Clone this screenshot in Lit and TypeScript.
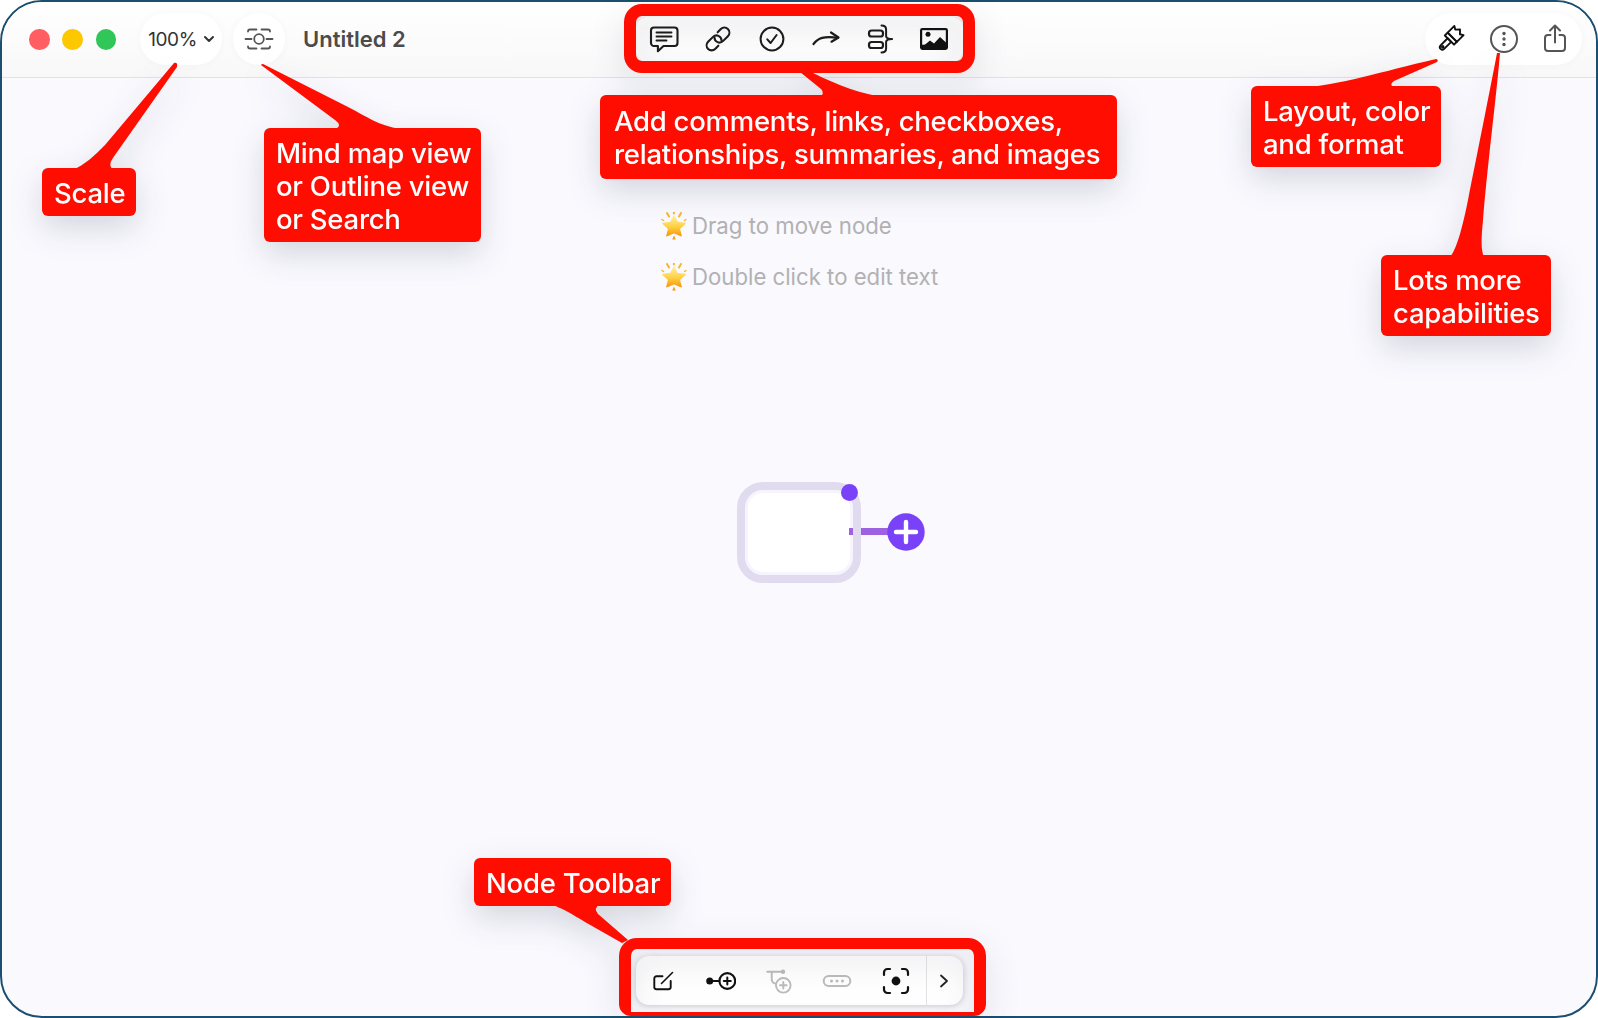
import { LitElement, html, css, svg } from "lit";
import { customElement } from "lit/decorators.js";

type Callout = { x: number; y: number; w: number; h: number; lines: string[] };

const callouts: Callout[] = [
  { x: 42, y: 168, w: 94, h: 48, lines: ["Scale"] },
  { x: 264, y: 128, w: 217, h: 114, lines: ["Mind map view", "or Outline view", "or Search"] },
  {
    x: 600,
    y: 95,
    w: 517,
    h: 84,
    lines: ["Add comments, links, checkboxes,", "relationships, summaries, and images"],
  },
  { x: 1251, y: 86, w: 190, h: 81, lines: ["Layout, color", "and format"] },
  { x: 1381, y: 255, w: 170, h: 81, lines: ["Lots more", "capabilities"] },
  { x: 474, y: 858, w: 197, h: 48, lines: ["Node Toolbar"] },
];

// the pointers that run from each red label to what it explains
const tails = [
  "M72 170 C85 165 95 155 105 145 L174 63 Q178 62 177 67 L115 155 C110 162 108 166 114 170 Z",
  "M261 65 Q262 63 265 65 L350 108 C365 116 380 126 400 129 L335 129 Q343 126 335 120 Z",
  "M800 72 L821 89 Q826 94 818 97 L885 97 C860 94 840 86 813 73 Z",
  "M1300 88 C1340 85 1380 72 1436 59 Q1439 60 1437 62 L1394 81 Q1388 85 1395 88 Z",
  "M1450 257 C1456 250 1462 230 1468 200 C1478 150 1490 90 1497 53 L1500 53 C1496 100 1488 160 1483 220 C1481 240 1481 250 1484 257 Z",
  "M550 904 C562 908 572 914 585 922 L622 943 L628 940 L598 914 Q593 908 600 904 Z",
];

const star = html`<svg class="star" width="26" height="28" viewBox="0 0 26 28">
  <defs>
    <linearGradient id="st" x1="0" y1="0" x2="0" y2="1">
      <stop offset="0" stop-color="#fff0a0" />
      <stop offset="0.55" stop-color="#ffd040" />
      <stop offset="1" stop-color="#f79a12" />
    </linearGradient>
  </defs>
  <path d="M6 1l2 3.5M20 1l-2 3.5M12.9 .5v1" stroke="#f8b730" stroke-width="2" stroke-linecap="round" fill="none" />
  <path d="M1 7.5l1.5 1M25 7.5l-1.5 1" stroke="#f8b730" stroke-width="1.5" stroke-linecap="round" fill="none" />
  <polygon
    points="13,4 16.2,10.6 24,11.5 18.2,16.7 20,23.6 13,20.5 6,23.6 7.8,16.7 2,11.5 9.8,10.6"
    fill="url(#st)"
    stroke="url(#st)"
    stroke-width="1.6"
    stroke-linejoin="round"
  />
  <path d="M13 23.5l1.8 4h-3.6z" fill="#f59a14" />
</svg>`;

const icon = (body: unknown, color = "#1c1c1c", w = 1.9) =>
  html`<svg
    class="ico"
    width="30"
    height="30"
    viewBox="0 0 30 30"
    fill="none"
    stroke=${color}
    stroke-width=${w}
    stroke-linecap="round"
    stroke-linejoin="round"
  >
    ${body}
  </svg>`;

const topIcons = [
  icon(svg`<path d="M5 3.500h20.500a3 3 0 0 1 3 3v12.500a3 3 0 0 1-3 3H14.500l-5.600 5.200v-5.200H5a3 3 0 0 1-3-3V6.500a3 3 0 0 1 3-3z" stroke-width="2.100"/><path d="M7.500 8.500h15M7.500 12.500h15M7.500 16.500h10"/>`),
  icon(svg`<g transform="rotate(-45 15 15)" stroke-width="2.100"><path d="M10.500 20H6A5 5 0 0 1 6 10H13A5 5 0 0 1 16.500 18.500"/><path d="M19.500 10H24A5 5 0 0 1 24 20H17A5 5 0 0 1 13.500 11.500"/></g>`),
  icon(svg`<circle cx="15" cy="15" r="11.400" stroke-width="2"/><path d="M10.300 15.300l3.300 3.700 6-8" stroke-width="2"/>`),
  icon(svg`<path d="M2.500 20C7 14 13 11.800 27 13.800" stroke-width="2.200"/><path d="M20 8.500l7.500 5-7 4.200" stroke-width="2.200"/>`),
  icon(svg`<rect x="4" y="6.500" width="14" height="6" rx="2.600" stroke-width="2.200"/><rect x="4" y="18" width="14" height="6" rx="2.600" stroke-width="2.200"/><path d="M16.500 1.500c3.400 0 4.600 1 4.600 4v6.400c0 2 1.200 3.100 6 3.100-4.800 0-6 1.100-6 3.100v6.400c0 3-1.200 4-4.600 4" stroke-width="2"/>`),
  icon(svg`<rect x="1" y="4" width="28" height="22" rx="2.400" fill="#111" stroke="none"/><rect x="3.200" y="6.200" width="23.600" height="14.500" fill="#fff" stroke="none"/><circle cx="9" cy="10.300" r="2.500" fill="#111" stroke="none"/><path d="M3 23l8-6.500 4 3 6-6.500 6 5.500v5.500H3z" fill="#111" stroke="none"/>`),
];

const bottomIcons = [
  icon(svg`<path d="M14.500 10.300H8.500a2.200 2.200 0 0 0-2.200 2.200v8.500a2.200 2.200 0 0 0 2.200 2.200h12a2.200 2.200 0 0 0 2.200-2.200v-6"/><path d="M13.500 17.500L24.500 6.500" stroke-width="1.600"/>`, "#111"),
  icon(svg`<circle cx="3.700" cy="15" r="3.500" fill="#111" stroke="none"/><path d="M6 15h7.500"/><circle cx="21.300" cy="15" r="7.900" stroke-width="2.100"/><path d="M21.300 11.500v7M17.800 15h7" stroke-width="2"/>`, "#111"),
  icon(svg`<path d="M3.300 5.700H19M7.700 5.700V13a5 5 0 0 0 4.300 4.800"/><circle cx="19" cy="5.700" r="2.200" fill="#bbb" stroke="none"/><circle cx="19.300" cy="19.300" r="7.300"/><path d="M19.300 16v6.600M16 19.300h6.600"/>`, "#bcbcbc"),
  icon(svg`<rect x="1.700" y="10" width="26.600" height="10" rx="5" stroke-width="2"/><g fill="#bcbcbc" stroke="none"><circle cx="9.500" cy="15" r="1.500"/><circle cx="15" cy="15" r="1.500"/><circle cx="20.500" cy="15" r="1.500"/></g>`, "#bcbcbc"),
  icon(svg`<path d="M3 9V6.500A3.500 3.500 0 0 1 6.500 3H9M21 3h2.500A3.500 3.500 0 0 1 27 6.500V9M27 21v2.500a3.500 3.500 0 0 1-3.500 3.500H21M9 27H6.500A3.500 3.500 0 0 1 3 23.500V21" stroke-width="2.200"/><circle cx="15" cy="15" r="4.400" fill="#111" stroke="none"/>`, "#111"),
];

const rightIcons = [
  icon(svg`<g transform="translate(-1.500 0) rotate(45 15 15)" stroke-width="1.900"><path d="M8.500 12.500V3l3.200 2L15 1.500 18.300 5l3.200-2v9.500z"/><path d="M8.500 12.500h13v4h-13z"/><path d="M12.500 16.500h5v10a2.500 2.500 0 0 1-5 0z"/><circle cx="15" cy="26" r="0.800"/></g>`, "#111"),
  icon(svg`<circle cx="15" cy="15" r="13" stroke-width="2"/><g fill="#555" stroke="none"><circle cx="15" cy="9.500" r="1.700"/><circle cx="15" cy="15" r="1.700"/><circle cx="15" cy="20.500" r="1.700"/></g>`, "#555"),
  icon(svg`<g transform="translate(-1 0)"><path d="M10.500 11H8a3 3 0 0 0-3 3v10a3 3 0 0 0 3 3h14a3 3 0 0 0 3-3V14a3 3 0 0 0-3-3h-2.500"/><path d="M15 18.500V2M10 6.500L15 1.500l5 5"/></g>`, "#555", 2),
];

const mapIcon = icon(
  svg`<circle cx="15" cy="15" r="4.800"/><path d="M1.500 15h6M22.500 15h6M4 7.500c0-1.500 .5-2 2-2h6.500M26 7.500c0-1.500-.5-2-2-2h-6.500M4 22.500c0 1.500 .5 2 2 2h6.500M26 22.500c0 1.500-.5 2-2 2h-6.500"/>`,
  "#555",
  1.8
);

@customElement("app-root")
export class AppRoot extends LitElement {
  static styles = css`
    :host {
      display: block;
      font-family: Inter, "Liberation Sans", sans-serif;
    }

    .stage {
      position: relative;
      width: 1598px;
      height: 1018px;
      background: #ffffff;
      overflow: hidden;
    }

    .window {
      box-sizing: border-box;
      width: 100%;
      height: 100%;
      display: flex;
      flex-direction: column;
      border: 2px solid #1b4e70;
      border-radius: 42px;
      overflow: hidden;
      background: #f9f9fe;
    }

    .titlebar {
      box-sizing: border-box;
      flex: none;
      height: 75.5px;
      display: grid;
      grid-template-columns: 1fr auto 1fr;
      align-items: center;
      padding: 0 14px;
      background: linear-gradient(#ffffff, #f8f8f9);
      border-bottom: 1px solid #e3e3e6;
    }

    .left {
      display: flex;
      align-items: center;
      margin-left: 13px;
    }

    .lights {
      display: flex;
      gap: 12.8px;
      margin-right: 24px;
    }

    .light {
      width: 20.5px;
      height: 20.5px;
      border-radius: 50%;
    }

    .red {
      background: #ff5f63;
    }

    .yellow {
      background: #fdc800;
    }

    .green {
      background: #30c758;
    }

    .pill {
      display: flex;
      align-items: center;
      height: 52px;
      border-radius: 26px;
      background: #ffffff;
      box-shadow: 0 0 8px rgba(0, 0, 0, 0.03);
    }

    .zoom {
      box-sizing: border-box;
      width: 82px;
      justify-content: center;
      gap: 6px;
      padding-left: 1px;
      font-size: 19px;
      letter-spacing: -0.4px;
      color: #333333;
    }

    .map {
      width: 52px;
      justify-content: center;
      margin-left: 11px;
    }

    .title {
      margin: -1px 0 0 18px;
      font-size: 22px;
      font-weight: 600;
      color: #4b4b4b;
    }

    .tools-bg {
      background: #f1f1f3;
      height: 45px;
    }

    .tools {
      box-sizing: border-box;
      width: 327px;
      height: 45px;
      display: flex;
      align-items: center;
      gap: 24.2px;
      padding-left: 13px;
      background: #ffffff;
      border-radius: 12px;
    }

    .right {
      justify-self: end;
      box-sizing: border-box;
      width: 157px;
      gap: 22px;
      padding-left: 12px;
    }

    .ico {
      flex: none;
      display: block;
    }

    .canvas {
      flex: 1;
      position: relative;
      display: flex;
      justify-content: center;
      align-items: flex-end;
      padding-bottom: 11px;
    }

    .hints {
      position: absolute;
      left: 658.5px;
      top: 134px;
      display: flex;
      flex-direction: column;
      gap: 23px;
    }

    .hint {
      display: flex;
      align-items: center;
      height: 28px;
      gap: 5.5px;
      font-size: 22.2px;
      color: #b1b1b3;
    }

    .star {
      flex: none;
    }

    .node {
      position: absolute;
      left: 735px;
      top: 404px;
      box-sizing: border-box;
      width: 124px;
      height: 101px;
      border: 8px solid #e1dbf0;
      border-radius: 26px;
      background: #ffffff;
      box-shadow: inset 0 0 0 3px #f6f4fd;
    }

    .handle {
      position: absolute;
      left: 96px;
      top: -5.5px;
      width: 17px;
      height: 17px;
      border-radius: 50%;
      background: #7a42f8;
    }

    .link {
      position: absolute;
      top: 38px;
      height: 7.5px;
      background: #9c62e2;
    }

    .stub {
      left: 104px;
      width: 4px;
    }

    .line {
      left: 116px;
      width: 29px;
    }

    .add {
      position: absolute;
      left: 142px;
      top: 23px;
    }

    .bar {
      box-sizing: border-box;
      width: 327px;
      height: 49px;
      display: flex;
      align-items: center;
      gap: 28.25px;
      padding-left: 12px;
      background: #ffffff;
      border-radius: 13px;
      box-shadow: 0 1px 6px rgba(0, 0, 0, 0.2);
    }

    .sep {
      align-self: stretch;
      width: 1.5px;
      margin-left: -13px;
      background: #e3e3e6;
    }

    .more {
      margin-left: -18px;
    }

    .notes {
      position: absolute;
      inset: 0;
      filter: drop-shadow(0 12px 16px rgba(30, 30, 60, 0.16));
    }

    .tails {
      position: absolute;
      inset: 0;
    }

    .note {
      position: absolute;
      box-sizing: border-box;
      display: flex;
      flex-direction: column;
      justify-content: center;
      padding: 2px 0 0 12px;
      background: #ff0d00;
      border-radius: 6px;
      color: #ffffff;
      font-size: 27.5px;
      font-weight: 500;
      letter-spacing: -0.25px;
      line-height: 33px;
      white-space: nowrap;
    }

    .wide {
      padding-left: 14px;
    }

    .frame {
      position: absolute;
      box-sizing: border-box;
      border: 12px solid #ff0d00;
      border-radius: 18px;
    }

    .frame.top {
      left: 624px;
      top: 4px;
      width: 351px;
      height: 69px;
    }

    .frame.bottom {
      left: 618.5px;
      top: 938px;
      width: 367px;
      height: 78px;
      border-width: 11.500px 12.500px 4.500px 12.500px;
      border-bottom-left-radius: 12px;
      border-bottom-right-radius: 12px;
    }
  `;

  render() {
    return html`
      <div class="stage">
        <div class="window">
          <div class="titlebar">
            <div class="left">
              <div class="lights">
                <div class="light red"></div>
                <div class="light yellow"></div>
                <div class="light green"></div>
              </div>
              <div class="pill zoom">
                <span>100%</span>
                <svg width="12" height="8" viewBox="0 0 12 8" fill="none" stroke="#333" stroke-width="2" stroke-linecap="round" stroke-linejoin="round">
                  <path d="M2 2l4 4 4-4" />
                </svg>
              </div>
              <div class="pill map">${mapIcon}</div>
              <div class="title">Untitled 2</div>
            </div>
            <div class="tools-bg"><div class="tools">${topIcons}</div></div>
            <div class="pill right">${rightIcons}</div>
          </div>
          <div class="canvas">
            <div class="hints">
              <div class="hint">${star}<span>Drag to move node</span></div>
              <div class="hint">${star}<span>Double click to edit text</span></div>
            </div>
            <div class="node">
              <div class="link stub"></div>
              <div class="link line"></div>
              <div class="handle"></div>
              <svg class="add" width="38" height="38" viewBox="0 0 38 38">
                <circle cx="19" cy="19" r="18.700" fill="#7a42f8" />
                <path d="M19 9v20M9 19h20" stroke="#fff" stroke-width="4.400" stroke-linecap="round" />
              </svg>
            </div>
            <div class="bar">
              ${bottomIcons}
              <div class="sep"></div>
              <svg class="more" width="12" height="16" viewBox="0 0 12 16" fill="none" stroke="#222" stroke-width="1.800" stroke-linecap="round" stroke-linejoin="round">
                <path d="M3 2.500L9 8l-6 5.500" />
              </svg>
            </div>
          </div>
        </div>
        <div class="notes">
          <svg class="tails" width="1598" height="1018" viewBox="0 0 1598 1018">
            ${tails.map((d) => svg`<path d=${d} fill="#ff0d00" />`)}
          </svg>
          <div class="frame top"></div>
          <div class="frame bottom"></div>
          ${callouts.map(
            (c) => html`<div
              class="note ${c.lines.length === 2 && c.w > 400 ? "wide" : ""}"
              style="left:${c.x}px;top:${c.y}px;width:${c.w}px;height:${c.h}px"
            >
              ${c.lines.map((l) => html`<div>${l}</div>`)}
            </div>`
          )}
        </div>
      </div>
    `;
  }
}

declare global {
  interface HTMLElementTagNameMap {
    "app-root": AppRoot;
  }
}
